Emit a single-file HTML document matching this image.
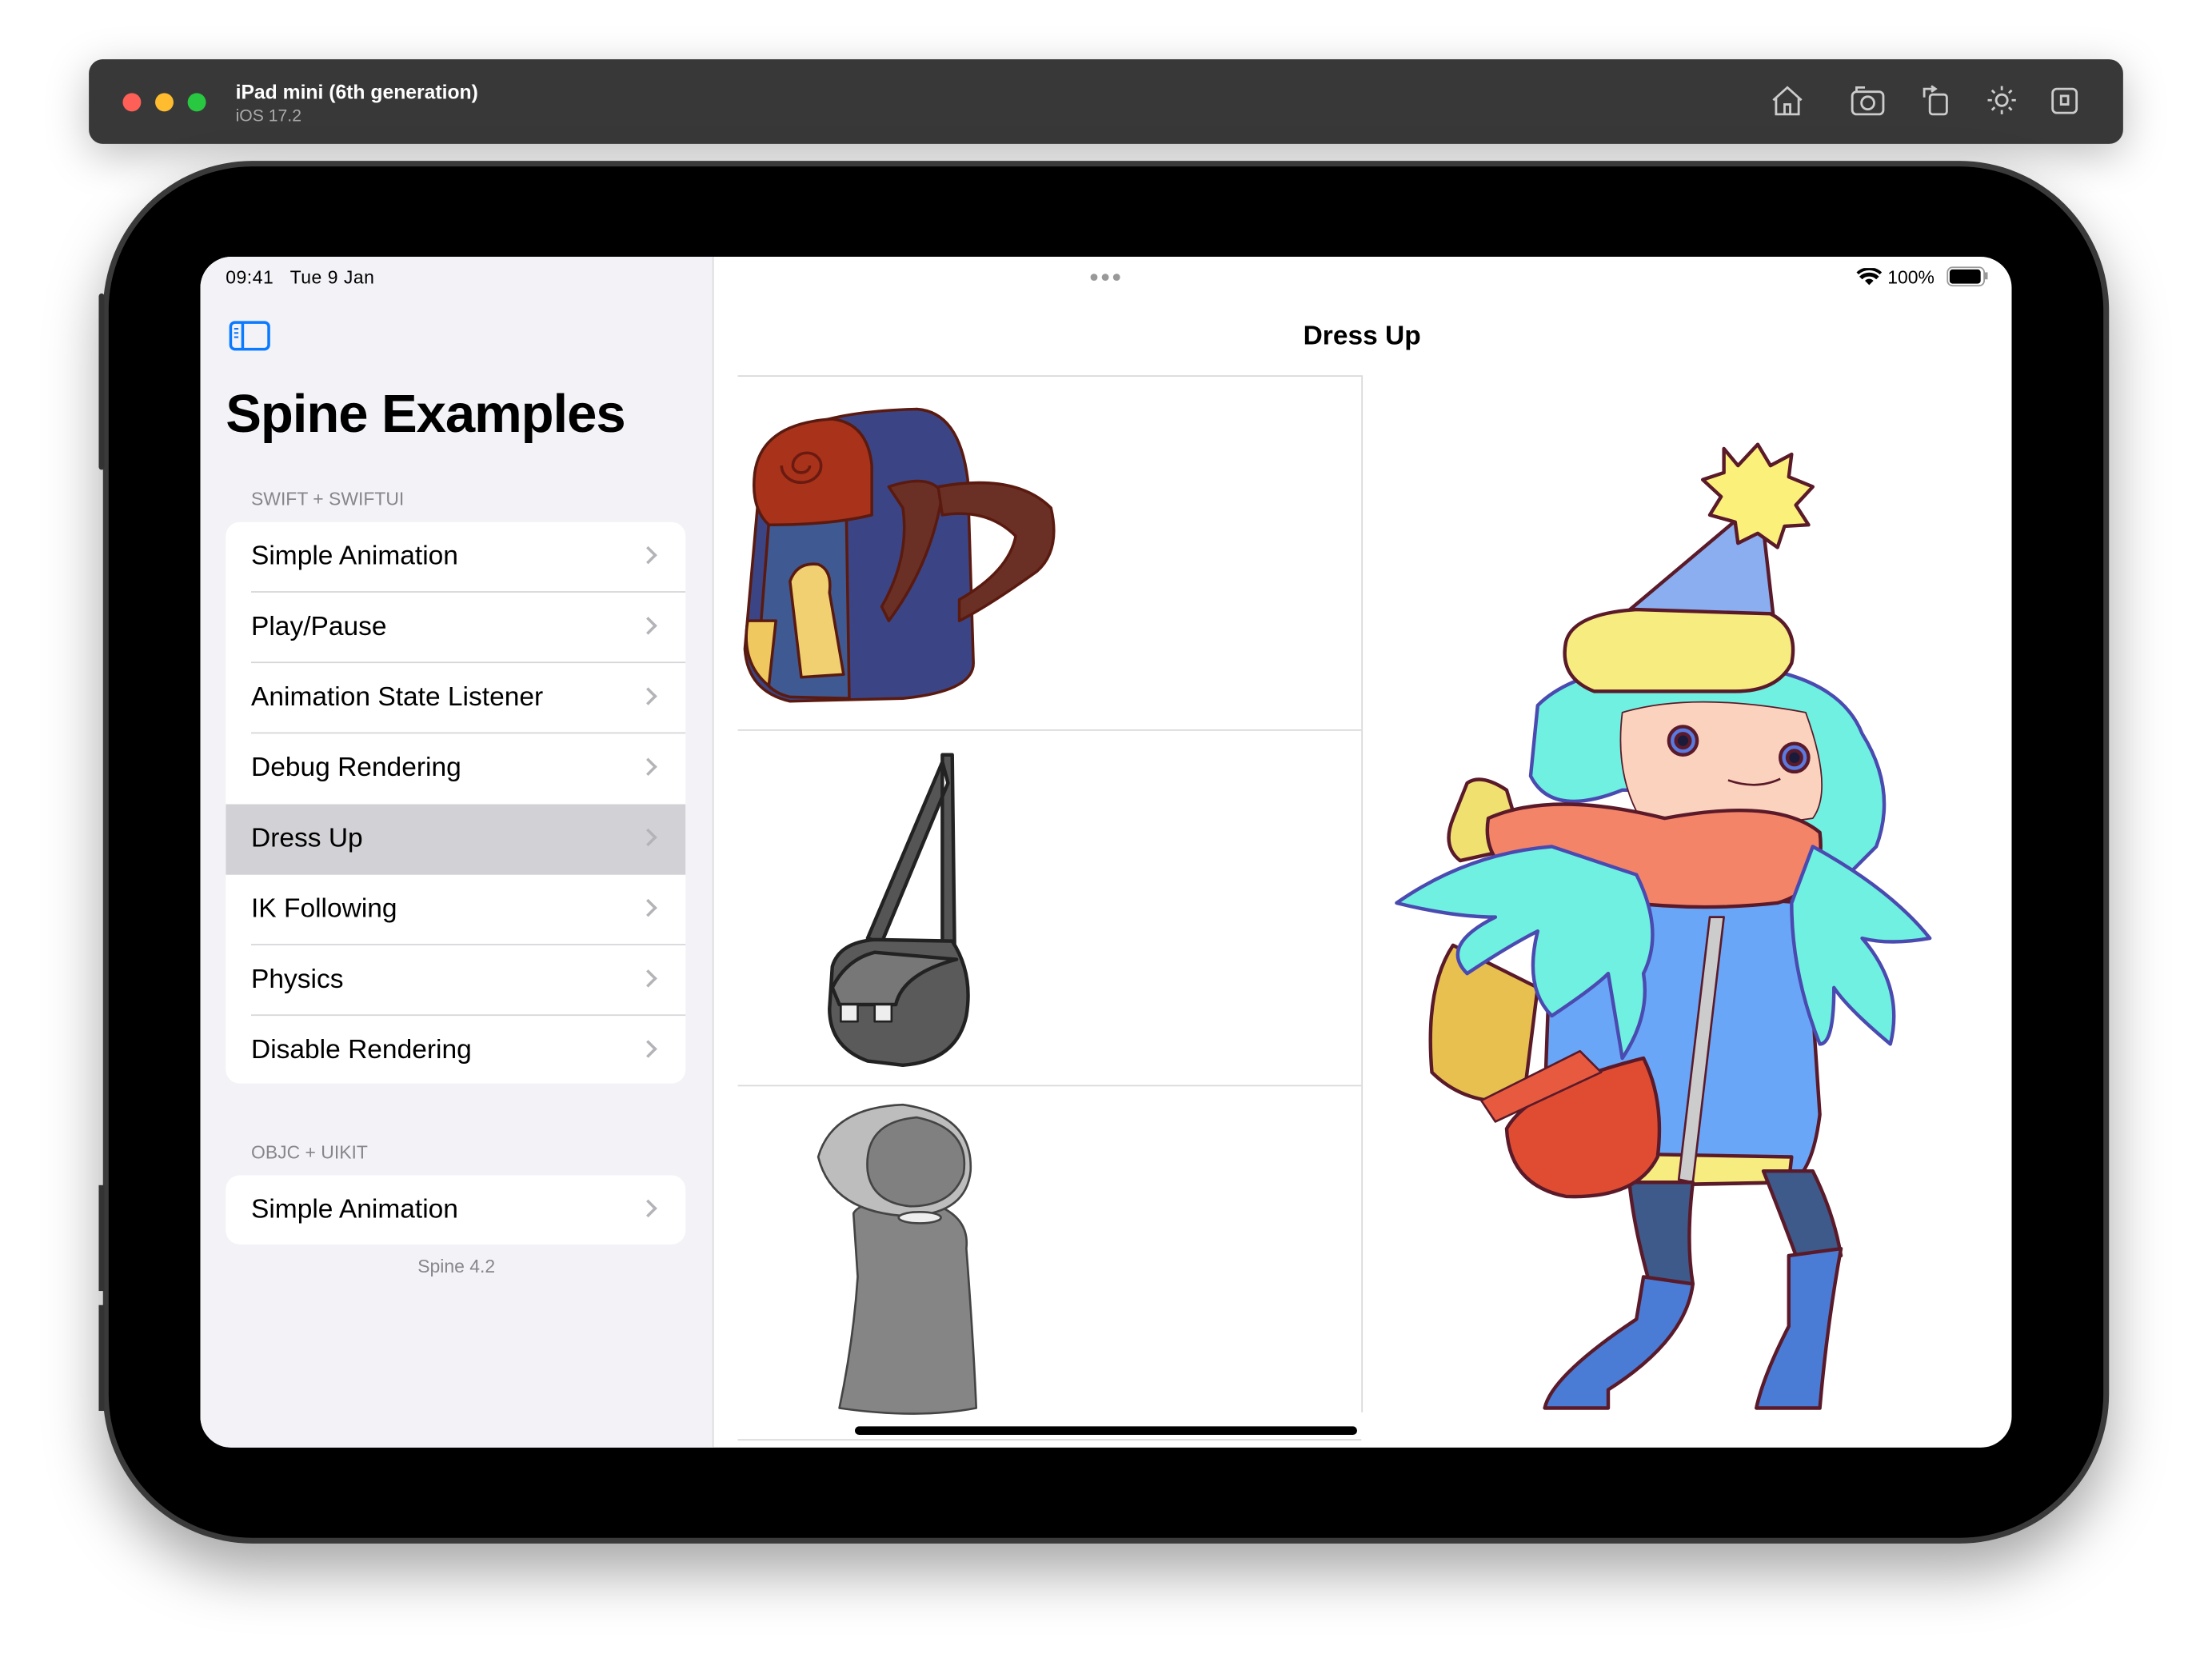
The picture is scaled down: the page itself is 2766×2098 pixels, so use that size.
<!DOCTYPE html>
<html><head><meta charset="utf-8"><style>
html,body{margin:0;padding:0;background:#fff;overflow:hidden}
body{width:2766px;height:2098px;position:relative}
#w{position:absolute;left:0;top:0;width:1568px;height:1189px;transform:scale(1.76403);transform-origin:0 0;font-family:"Liberation Sans",sans-serif}
.a{position:absolute}
.row{position:absolute;left:0;right:0;height:50px;font-size:19px;color:#000;line-height:50px;padding-left:18px;box-sizing:border-box}
.row:after{content:"";position:absolute;left:18px;right:0;bottom:0;height:1px;background:#d6d6da}
.row.nl:after{display:none}
.chev{position:absolute;right:22px;top:19px;width:7px;height:7px;border-right:2px solid #b4b4b8;border-top:2px solid #b4b4b8;transform:rotate(45deg)}
</style></head><body><div id="w">
<div class="a" style="left:63px;top:42px;width:1442px;height:60px;border-radius:10px;background:#383838;box-shadow:0 8px 30px rgba(0,0,0,.25)"></div>
<div class="a" style="left:87px;top:66px;width:13px;height:13px;border-radius:50%;background:#fe5f57"></div>
<div class="a" style="left:110px;top:66px;width:13px;height:13px;border-radius:50%;background:#febc2e"></div>
<div class="a" style="left:133px;top:66px;width:13px;height:13px;border-radius:50%;background:#28c840"></div>
<div class="a" style="left:167px;top:57px;color:#fff;font-weight:bold;font-size:14px">iPad mini (6th generation)</div>
<div class="a" style="left:167px;top:75px;color:#aaa;font-size:12px">iOS 17.2</div>
<svg class="a" style="left:1250px;top:58px" width="230" height="28" viewBox="0 0 230 28" fill="none" stroke="#ccc" stroke-width="1.6">
<path d="M7 13 L17 4 L27 13 M9 11 V23 H25 V11 M15 23 V16 H19 V23"/>
<rect x="63" y="7" width="22" height="16" rx="3"/><circle cx="74" cy="15" r="4.5"/><path d="M66 7 V4 H72"/>
<rect x="118" y="9" width="12" height="14" rx="2"/><path d="M114 11 V5 H122 M119 3 L122 5 L119 7"/>
<circle cx="169" cy="13" r="4"/><path d="M169 3V6M169 20V23M159 13H162M176 13H179M162 6L164 8M174 18L176 20M162 20L164 18M174 8L176 6"/>
<rect x="205" y="5" width="17" height="17" rx="3"/><path d="M211 10h5v6h-5z"/>
</svg>
<div class="a" style="left:73px;top:114px;width:1422px;height:980px;border-radius:106px;background:#3a3a3a;box-shadow:0 20px 40px rgba(0,0,0,.35)"></div>
<div class="a" style="left:77px;top:118px;width:1414px;height:972px;border-radius:102px;background:#000"></div>
<div class="a" style="left:70px;top:208px;width:4px;height:125px;background:#333;border-radius:2px"></div>
<div class="a" style="left:70px;top:840px;width:4px;height:75px;background:#333"></div>
<div class="a" style="left:70px;top:925px;width:4px;height:75px;background:#333"></div>
<div class="a" style="left:142px;top:182px;width:1284px;height:844px;border-radius:22px;background:#fff;overflow:hidden">
 <div class="a" style="left:0;top:0;width:363px;height:844px;background:#f2f2f7;border-right:1px solid #dcdcdf"></div>
 <div class="a" style="left:18px;top:7px;font-size:13px;letter-spacing:.3px">09:41&nbsp;&nbsp; Tue 9 Jan</div>
 <svg class="a" style="left:20px;top:45px" width="30" height="22" viewBox="0 0 30 22" fill="none" stroke="#0a7aff" stroke-width="2"><rect x="1.5" y="1.5" width="27" height="19" rx="3"/><path d="M10 2V20"/><path d="M4 6h3M4 9h3M4 12h3" stroke-width="1.2"/></svg>
 <div class="a" style="left:18px;top:91px;font-size:38px;font-weight:bold;letter-spacing:-.6px">Spine Examples</div>
 <div class="a" style="left:36px;top:164px;font-size:13px;color:#86868b">SWIFT + SWIFTUI</div>
 <div class="a" style="left:18px;top:188px;width:326px;height:398px;background:#fff;border-radius:10px;overflow:hidden">
  <div class="row" style="top:0">Simple Animation<i class="chev"></i></div>
  <div class="row" style="top:50px">Play/Pause<i class="chev"></i></div>
  <div class="row" style="top:100px">Animation State Listener<i class="chev"></i></div>
  <div class="row nl" style="top:150px">Debug Rendering<i class="chev"></i></div>
  <div class="row nl" style="top:200px;background:#d1d1d6">Dress Up<i class="chev"></i></div>
  <div class="row" style="top:250px">IK Following<i class="chev"></i></div>
  <div class="row" style="top:300px">Physics<i class="chev"></i></div>
  <div class="row nl" style="top:350px">Disable Rendering<i class="chev"></i></div>
 </div>
 <div class="a" style="left:36px;top:627px;font-size:13px;color:#86868b">OBJC + UIKIT</div>
 <div class="a" style="left:18px;top:651px;width:326px;height:49px;background:#fff;border-radius:10px;overflow:hidden">
  <div class="row nl" style="top:0">Simple Animation<i class="chev"></i></div>
 </div>
 <div class="a" style="left:0;width:363px;top:708px;text-align:center;font-size:13px;color:#86868b">Spine 4.2</div>
 <div class="a" style="left:631px;top:12px;width:5px;height:5px;border-radius:50%;background:#999;box-shadow:8px 0 #999,16px 0 #999"></div>
 <div class="a" style="left:1196px;top:7px;font-size:13px">100%</div>
 <svg class="a" style="left:1174px;top:8px" width="18" height="13" viewBox="0 0 18 13"><path d="M9 12L6 9A4 4 0 0 1 12 9Z M2 6A10 10 0 0 1 16 6L14 8A7 7 0 0 0 4 8Z M0 3A13 13 0 0 1 18 3L16.5 4.5A11 11 0 0 0 1.5 4.5Z" fill="#000"/></svg>
 <div class="a" style="left:1238px;top:7px;width:25px;height:12px;border:1px solid #999;border-radius:4px"></div>
 <div class="a" style="left:1240px;top:9px;width:22px;height:10px;background:#000;border-radius:2px"></div>
 <div class="a" style="left:1265px;top:11px;width:2px;height:5px;background:#999"></div>
 <div class="a" style="left:363px;width:921px;top:46px;text-align:center;font-size:19px;font-weight:bold">Dress Up</div>
 <div class="a" style="left:381px;top:84px;width:442px;height:1px;background:#d9d9d9"></div>
 <div class="a" style="left:381px;top:335px;width:442px;height:1px;background:#d9d9d9"></div>
 <div class="a" style="left:381px;top:587px;width:442px;height:1px;background:#d9d9d9"></div>
 <div class="a" style="left:381px;top:838px;width:442px;height:1px;background:#d9d9d9"></div>
 <div class="a" style="left:823px;top:84px;width:1px;height:735px;background:#d9d9d9"></div>
 <div class="a" style="left:464px;top:829px;width:356px;height:6px;border-radius:3px;background:#000"></div>
</div>
<svg class="a" style="left:0;top:0" width="1568" height="1189" viewBox="0 0 1568 1189" stroke-linejoin="round">
<g stroke="#5a1a10" stroke-width="2">
<path d="M540 325 Q560 292 650 290 Q680 292 686 340 L690 470 Q690 490 640 495 L560 497 Q530 490 528 460 Z" fill="#3b4585"/>
<path d="M545 370 L600 368 L602 495 L560 494 Q535 488 538 460 Z" fill="#3f5a92"/>
<path d="M535 335 Q540 300 590 297 Q615 300 618 330 L618 365 Q590 372 545 372 Q532 360 535 335Z" fill="#a8321a"/>
<path d="M568 330 m-14 0 a14 12 0 1 0 28 0 a10 9 0 1 0 -20 0 a6 5 0 1 0 12 0" fill="none" stroke="#6a1a10"/>
<path d="M630 345 Q660 335 668 350 Q660 400 630 440 L625 430 Q645 395 640 360Z" fill="#6b3025"/>
<path d="M665 345 Q720 335 745 360 Q752 390 735 405 Q700 430 680 440 L680 425 Q715 405 720 380 Q700 360 668 365Z" fill="#6b3025"/>
<path d="M560 412 Q565 398 580 400 Q590 404 588 420 L598 478 L568 480 Z" fill="#f0d070"/>
<path d="M530 440 Q525 470 545 486 L550 440Z" fill="#f0c860"/>
</g>
<g stroke="#222" stroke-width="2.5">
<path d="M668 535 L675 535 L677 700 L668 700Z M668 540 L615 665 L625 668 L672 555Z" fill="#555"/>
<path d="M590 685 Q595 668 620 666 L675 667 Q690 690 685 720 Q678 752 640 755 L615 752 Q588 742 588 715Z" fill="#5a5a5a"/>
<path d="M590 700 Q600 680 620 675 L678 680 Q640 690 635 712 L595 712Z" fill="#777"/>
<rect x="596" y="712" width="12" height="12" fill="#eee" stroke-width="1.5"/><rect x="620" y="712" width="12" height="12" fill="#eee" stroke-width="1.5"/>
</g>
<g stroke="#444" stroke-width="1.5">
<path d="M605 860 Q610 850 650 850 Q688 858 685 885 Q690 950 692 998 Q650 1006 595 998 Q605 950 608 905Z" fill="#858585"/>
<path d="M580 820 Q590 785 640 783 Q690 790 688 830 Q685 860 645 862 Q590 860 580 820Z" fill="#bdbdbd"/>
<path d="M615 830 Q612 795 650 792 Q688 800 683 832 Q675 855 645 855 Q618 852 615 830Z" fill="#808080"/>
<ellipse cx="652" cy="863" rx="15" ry="4" fill="#eee"/>
</g>
<g stroke="#5a1a2a" stroke-width="2.5">
<path d="M1068 560 Q1050 548 1040 555 L1030 580 Q1022 600 1035 610 L1080 600Z" fill="#f0e070"/>
<path d="M1030 670 Q1010 700 1015 760 Q1040 785 1080 780 L1090 700Z" fill="#e8c050"/>
<path d="M1100 640 Q1150 630 1280 640 L1290 790 Q1285 830 1270 838 L1170 840 Q1100 830 1095 780Z" fill="#6aa6f8"/>
<path d="M1160 818 L1270 820 L1268 838 L1160 840Z" fill="#f6ec80"/>
<path d="M1212 650 L1222 650 L1200 838 L1190 836Z" fill="#ccc" stroke-width="1.5"/>
<path d="M1155 838 L1200 838 Q1195 880 1200 910 L1170 912 Q1158 870 1155 838Z" fill="#3d5a8a"/>
<path d="M1250 830 L1285 830 Q1300 860 1305 890 L1275 895 Q1262 860 1250 830Z" fill="#3d5a8a"/>
<path d="M1165 905 L1200 910 Q1195 950 1140 985 L1140 998 L1095 998 Q1100 975 1160 935Z" fill="#4a7cd6"/>
<path d="M1268 890 L1305 885 Q1295 940 1290 998 L1245 998 Q1250 975 1268 940Z" fill="#4a7cd6"/>
<path d="M1165 750 Q1180 780 1175 820 Q1160 850 1110 848 Q1070 840 1068 800 Q1085 770 1165 750Z" fill="#e04c32"/>
<path d="M1050 780 L1120 745 L1135 760 L1060 795Z" fill="#e85a40" stroke-width="1.5"/>
<path d="M1090 500 Q1120 470 1200 470 Q1300 470 1320 520 Q1345 560 1330 600 L1290 640 Q1270 600 1280 560 L1150 560 Q1100 580 1085 550Z" fill="#6ff0e0" stroke="#4a4ab0"/>
<path d="M1150 505 Q1200 490 1280 505 Q1300 560 1285 580 Q1220 590 1160 575 Q1145 545 1150 505Z" fill="#fbd2bd" stroke-width="1"/>
<circle cx="1193" cy="525" r="10" fill="#5a7ae0"/><circle cx="1193" cy="525" r="5" fill="#1a1a3a"/>
<circle cx="1272" cy="537" r="10" fill="#5a7ae0"/><circle cx="1272" cy="537" r="5" fill="#1a1a3a"/>
<path d="M1225 553 Q1245 560 1262 552" fill="none" stroke-width="1.5"/>
<path d="M1055 580 Q1100 560 1180 580 Q1260 565 1290 590 Q1295 630 1260 640 Q1170 650 1080 625 Q1050 610 1055 580Z" fill="#f48468"/>
<path d="M1100 600 Q1040 605 990 640 Q1030 650 1060 650 Q1020 670 1040 690 Q1070 670 1090 660 Q1080 700 1100 720 Q1130 700 1140 690 L1150 750 Q1170 720 1165 690 Q1180 660 1160 620Z" fill="#6ff0e0" stroke="#4a4ab0"/>
<path d="M1285 600 Q1340 630 1368 665 Q1340 670 1320 665 Q1350 700 1340 740 Q1310 715 1300 700 Q1300 740 1290 740 Q1270 690 1270 640Z" fill="#6ff0e0" stroke="#4a4ab0"/>
<path d="M1140 445 L1235 365 L1250 375 L1258 445Z" fill="#8aaef0"/>
<path d="M1110 455 Q1115 435 1160 432 L1255 435 Q1275 445 1270 470 Q1260 490 1230 490 L1130 490 Q1105 480 1110 455Z" fill="#f6ec80"/>
<path d="M1222 318 L1232 330 L1246 315 L1255 330 L1270 322 L1268 338 L1285 345 L1273 358 L1282 372 L1265 373 L1260 388 L1246 378 L1232 385 L1230 370 L1212 365 L1220 352 L1207 340 L1222 335Z" fill="#fbf07a"/>
</g>
</svg>
</div></body></html>
